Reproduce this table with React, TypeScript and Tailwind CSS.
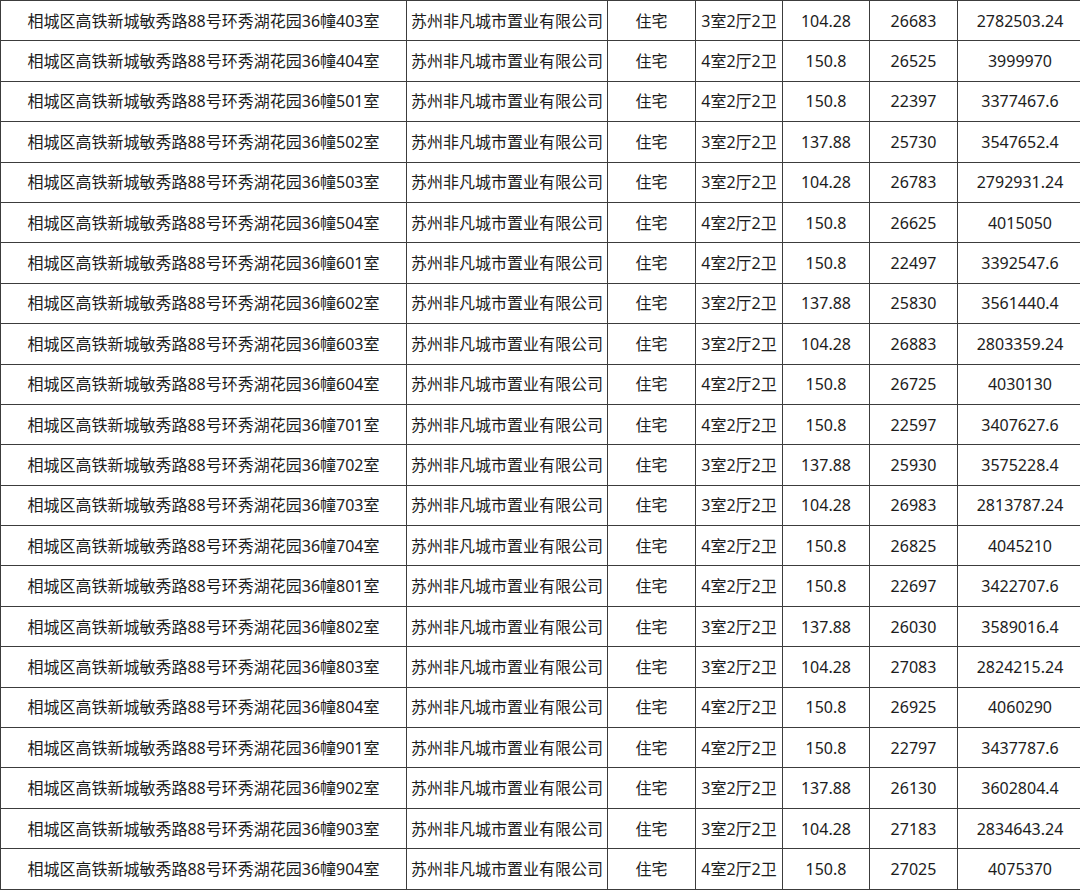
import React from 'react';

type Row = [string, string, string, string, string, string];

// unit, layout, area, unit price, total
const rows: Row[] = [
  ['403', '3室2厅2卫', '104.28', '26683', '2782503.24', ''],
  ['404', '4室2厅2卫', '150.8', '26525', '3999970', ''],
  ['501', '4室2厅2卫', '150.8', '22397', '3377467.6', ''],
  ['502', '3室2厅2卫', '137.88', '25730', '3547652.4', ''],
  ['503', '3室2厅2卫', '104.28', '26783', '2792931.24', ''],
  ['504', '4室2厅2卫', '150.8', '26625', '4015050', ''],
  ['601', '4室2厅2卫', '150.8', '22497', '3392547.6', ''],
  ['602', '3室2厅2卫', '137.88', '25830', '3561440.4', ''],
  ['603', '3室2厅2卫', '104.28', '26883', '2803359.24', ''],
  ['604', '4室2厅2卫', '150.8', '26725', '4030130', ''],
  ['701', '4室2厅2卫', '150.8', '22597', '3407627.6', ''],
  ['702', '3室2厅2卫', '137.88', '25930', '3575228.4', ''],
  ['703', '3室2厅2卫', '104.28', '26983', '2813787.24', ''],
  ['704', '4室2厅2卫', '150.8', '26825', '4045210', ''],
  ['801', '4室2厅2卫', '150.8', '22697', '3422707.6', ''],
  ['802', '3室2厅2卫', '137.88', '26030', '3589016.4', ''],
  ['803', '3室2厅2卫', '104.28', '27083', '2824215.24', ''],
  ['804', '4室2厅2卫', '150.8', '26925', '4060290', ''],
  ['901', '4室2厅2卫', '150.8', '22797', '3437787.6', ''],
  ['902', '3室2厅2卫', '137.88', '26130', '3602804.4', ''],
  ['903', '3室2厅2卫', '104.28', '27183', '2834643.24', ''],
  ['904', '4室2厅2卫', '150.8', '27025', '4075370', ''],
];

const cell = 'border border-[#3c3c3c] text-center align-middle p-0 whitespace-nowrap overflow-hidden';

export default function App() {
  return (
    <div className="w-[1080px] h-[890px] overflow-hidden bg-white">
      <table
        className="table-fixed border-collapse w-[1082px] text-[16px] text-[#1c1c1c] font-['Noto_Sans','Noto_Sans_CJK_SC',sans-serif]"
      >
        <colgroup>
          <col className="w-[406px]" />
          <col className="w-[201px]" />
          <col className="w-[88px]" />
          <col className="w-[87px]" />
          <col className="w-[87px]" />
          <col className="w-[88px]" />
          <col className="w-[125px]" />
        </colgroup>
        <tbody>
          {rows.map(([unit, layout, area, price, total]) => (
            <tr key={unit} className="h-[40.4px]">
              <td className={cell}>相城区高铁新城敏秀路88号环秀湖花园36幢{unit}室</td>
              <td className={cell}>苏州非凡城市置业有限公司</td>
              <td className={cell}>住宅</td>
              <td className={cell}>{layout}</td>
              <td className={cell}>{area}</td>
              <td className={cell}>{price}</td>
              <td className={cell}>{total}</td>
            </tr>
          ))}
        </tbody>
      </table>
    </div>
  );
}
